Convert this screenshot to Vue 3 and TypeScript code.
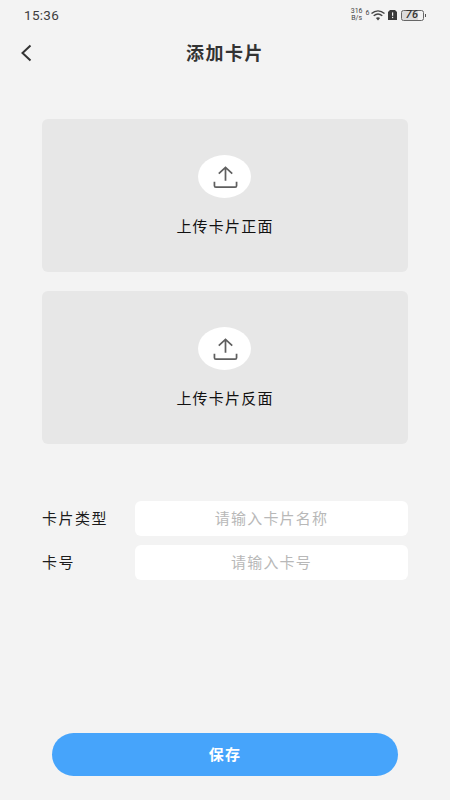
<script setup lang="ts">
const uploads = ['上传卡片正面', '上传卡片反面']
const fields = [
  { label: '卡片类型', hint: '请输入卡片名称' },
  { label: '卡号', hint: '请输入卡号' },
]
</script>

<template>
  <div class="page">
    <div class="status">
      <span class="time">15:36</span>
      <div class="status-icons">
        <span class="speed">316<br />B/s</span>
        <span class="six">6</span>
        <svg width="16" height="11" viewBox="0 0 15 11" class="wifi">
          <path d="M1 3.6C5 0 10 0 14 3.6" fill="none" stroke="#444" stroke-width="1.4" />
          <path d="M3.2 5.8C6 3.4 9 3.4 11.8 5.8" fill="none" stroke="#444" stroke-width="1.4" />
          <path d="M5.4 8C6.6 6.9 8.4 6.9 9.6 8L7.5 10.4Z" fill="#444" />
        </svg>
        <svg width="9" height="10" viewBox="0 0 9 10" class="sim">
          <path d="M2 0H7L9 2V10H0V2Z" fill="#3a3a3a" />
          <rect x="4" y="2.4" width="1.2" height="3.4" fill="#f3f3f3" />
          <rect x="4" y="6.8" width="1.2" height="1.3" fill="#f3f3f3" />
        </svg>
        <span class="battery"><span class="level">76</span></span>
        <span class="nub"></span>
      </div>
    </div>

    <header class="nav">
      <svg class="back" width="12" height="18" viewBox="0 0 12 18">
        <path d="M10.5 1.5L2.5 9L10.5 16.5" fill="none" stroke="#333" stroke-width="2" />
      </svg>
      <h1 class="title">添加卡片</h1>
    </header>

    <section class="uploads">
      <div v-for="u in uploads" :key="u" class="upload">
        <div class="bubble">
          <svg width="26" height="24" viewBox="0 0 26 24">
            <path d="M13 2V16M6 8.5L13 2L20 8.5" fill="none" stroke="#5f5f5f" stroke-width="1.8" />
            <path d="M1.5 17V21Q1.5 22.5 3 22.5H23Q24.5 22.5 24.5 21V17" fill="none" stroke="#5f5f5f" stroke-width="1.8" />
          </svg>
        </div>
        <span class="upload-text">{{ u }}</span>
      </div>
    </section>

    <section class="form">
      <div v-for="f in fields" :key="f.label" class="row">
        <span class="label">{{ f.label }}</span>
        <div class="input">{{ f.hint }}</div>
      </div>
    </section>

    <div class="spacer"></div>
    <button class="save" type="button">保存</button>
  </div>
</template>

<style scoped>
.page {
  width: 450px;
  height: 800px;
  background: #f3f3f3;
  display: flex;
  flex-direction: column;
  font-family: "Noto Sans CJK SC", "Noto Sans", sans-serif;
  color: #222;
  overflow: hidden;
}
.status {
  height: 30px;
  padding: 0 24px;
  display: flex;
  align-items: center;
  justify-content: space-between;
}
.time {
  font-family: Roboto, sans-serif;
  font-size: 13.5px;
  color: #3d3d3d;
  letter-spacing: 0.3px;
}
.status-icons {
  display: flex;
  align-items: center;
}
.speed {
  font-family: Roboto, sans-serif;
  font-size: 7px;
  line-height: 7px;
  color: #444;
  text-align: center;
  margin-right: 3px;
}
.six {
  font-family: Roboto, sans-serif;
  font-size: 7px;
  color: #444;
  margin-top: -5px;
}
.wifi {
  margin-right: 2px;
}
.sim {
  margin-right: 4px;
}
.battery {
  width: 21px;
  height: 9px;
  border: 1px solid #666;
  border-radius: 2.5px;
  background: linear-gradient(to right, #dcdcdc 76%, transparent 76%);
  display: flex;
  align-items: center;
  justify-content: center;
}
.level {
  font-family: Roboto, sans-serif;
  font-size: 11px;
  font-weight: 500;
  font-style: italic;
  line-height: 10px;
  color: #333;
  letter-spacing: 0.5px;
}
.nub {
  width: 1.5px;
  height: 3px;
  margin-left: 1px;
  background: #555;
}
.nav {
  position: relative;
  height: 48px;
  display: flex;
  align-items: center;
  justify-content: center;
}
.back {
  position: absolute;
  left: 20px;
  top: 14px;
}
.title {
  margin: -4px 0 0;
  font-size: 18px;
  font-weight: 700;
  color: #333;
  letter-spacing: 1.5px;
}
.uploads {
  margin-top: 41px;
  padding: 0 42px;
  display: flex;
  flex-direction: column;
  gap: 19px;
}
.upload {
  height: 153px;
  background: #e7e7e7;
  border-radius: 6px;
  display: flex;
  flex-direction: column;
  align-items: center;
  padding-top: 36px;
  box-sizing: border-box;
}
.bubble {
  width: 53px;
  height: 43px;
  margin-right: 1px;
  padding-left: 2px;
  box-sizing: border-box;
  border-radius: 50%;
  background: #fff;
  display: flex;
  align-items: center;
  justify-content: center;
}
.bubble svg {
  width: 25px;
  height: 24px;
}
.upload-text {
  margin-top: 16px;
  font-size: 15px;
  line-height: 24px;
  color: #111;
  letter-spacing: 1.2px;
}
.form {
  margin-top: 57px;
  padding: 0 42px;
  display: flex;
  flex-direction: column;
  gap: 9px;
}
.row {
  display: flex;
  align-items: center;
}
.label {
  width: 93px;
  margin-top: -2px;
  font-size: 15px;
  color: #1c1c1c;
  letter-spacing: 1.5px;
}
.input {
  flex: 1;
  height: 35px;
  line-height: 33px;
  background: #fff;
  border-radius: 6px;
  text-align: center;
  font-size: 15px;
  letter-spacing: 1.2px;
  color: #b8b8b8;
}
.spacer {
  flex: 1;
}
.save {
  align-self: center;
  width: 346px;
  height: 43px;
  margin-bottom: 24px;
  padding: 0 0 2px;
  border: 0;
  border-radius: 22px;
  background: #46a4fb;
  color: #fff;
  font-family: inherit;
  font-size: 15px;
  font-weight: 700;
  letter-spacing: 1.2px;
}
</style>
